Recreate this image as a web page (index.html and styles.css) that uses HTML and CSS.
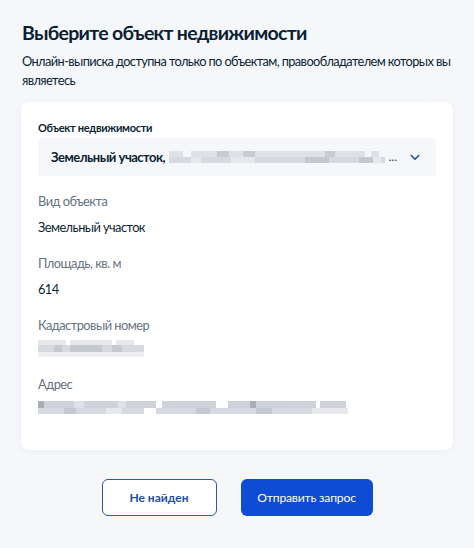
FILE: index.html
```html
<!DOCTYPE html>
<html lang="ru">
<head>
<meta charset="utf-8">
<link rel="stylesheet" href="styles.css">
</head>
<body>
<main class="page">
  <h1 class="title">Выберите объект недвижимости</h1>
  <p class="subtitle">Онлайн-выписка доступна только по объектам, правообладателем которых вы являетесь</p>
  <section class="card">
    <div class="field-label">Объект недвижимости</div>
    <div class="select">
      <span class="select-text">Земельный участок,</span>
      <span class="blur blur-select">
        <span class="row"><i style="width:14px"></i><i class="gap" style="width:8px"></i><i style="width:26px"></i><i class="dk" style="width:12px"></i><i style="width:14px"></i><i class="dk" style="width:12px"></i><i style="width:70px"></i><i class="dk" style="width:10px"></i><i style="width:30px"></i><i class="gap" style="width:6px"></i><i style="width:8px"></i></span>
        <span class="row"><i style="width:22px"></i><i class="lt" style="width:10px"></i><i style="width:30px"></i><i class="lt" style="width:24px"></i><i style="width:50px"></i><i class="dk" style="width:24px"></i><i style="width:30px"></i><i class="dk" style="width:14px"></i><i class="lt" style="width:8px"></i><i style="width:8px"></i></span>
      </span>
      <span class="dots">...</span>
      <svg class="chev" width="10" height="7" viewBox="0 0 10 7"><path d="M1.3 1.5 5 5.2 8.7 1.5" fill="none" stroke="#1d4fa8" stroke-width="1.6" stroke-linecap="round" stroke-linejoin="round"/></svg>
    </div>
    <div class="item">
      <div class="item-label">Вид объекта</div>
      <div class="item-value">Земельный участок</div>
    </div>
    <div class="item">
      <div class="item-label">Площадь, кв. м</div>
      <div class="item-value">614</div>
    </div>
    <div class="item">
      <div class="item-label">Кадастровый номер</div>
      <div class="blur blur-cad">
        <span class="row"><i class="lt" style="width:28px"></i><i class="gap" style="width:4px"></i><i class="lt" style="width:42px"></i><i class="gap" style="width:4px"></i><i class="lt" style="width:18px"></i></span>
        <span class="row"><i style="width:16px"></i><i class="dk" style="width:8px"></i><i style="width:8px"></i><i class="dk" style="width:32px"></i><i style="width:10px"></i><i class="dk" style="width:10px"></i><i style="width:22px"></i></span>
        <span class="row"><i class="lt" style="width:106px"></i></span>
      </div>
    </div>
    <div class="item">
      <div class="item-label">Адрес</div>
      <div class="blur blur-addr">
        <span class="row"><i class="dk" style="width:6px"></i><i style="width:30px"></i><i class="lt" style="width:10px"></i><i style="width:34px"></i><i class="lt" style="width:8px"></i><i style="width:30px"></i><i class="gap" style="width:6px"></i><i style="width:54px"></i><i class="gap" style="width:12px"></i><i style="width:22px"></i><i class="dk" style="width:6px"></i><i style="width:60px"></i><i class="gap" style="width:4px"></i><i style="width:26px"></i></span>
        <span class="row"><i style="width:26px"></i><i class="dk" style="width:12px"></i><i style="width:30px"></i><i class="lt" style="width:16px"></i><i style="width:22px"></i><i class="gap" style="width:12px"></i><i style="width:40px"></i><i class="dk" style="width:14px"></i><i style="width:46px"></i><i class="dk" style="width:16px"></i><i style="width:40px"></i><i class="lt" style="width:36px"></i></span>
      </div>
    </div>
  </section>
  <div class="actions">
    <button class="btn btn-outline">Не найден</button>
    <button class="btn btn-primary">Отправить запрос</button>
  </div>
</main>
</body>
</html>
```
FILE: styles.css
```css
html, body {
  margin: 0;
  padding: 0;
  background: #f5f7fb;
}
body {
  font-family: Lato, "Noto Sans", sans-serif;
  color: #0b1f33;
  width: 474px;
  height: 548px;
  overflow: hidden;
}
.page {
  padding: 20px 21px 0 21px;
}
.title {
  margin: 0 0 0 1px;
  font-size: 19.5px;
  line-height: 26px;
  font-weight: 700;
  letter-spacing: -0.7px;
  color: #0b1f33;
}
.subtitle {
  margin: 6px 0 0 1px;
  font-size: 12.8px;
  line-height: 18.5px;
  letter-spacing: -0.6px;
  color: #0b1f33;
}
.card {
  margin-top: 13px;
  background: #fff;
  border-radius: 8px;
  box-shadow: 0 1px 6px rgba(30, 60, 120, 0.06);
  padding: 18px 17px 26px 17px;
  height: 304px;
}
.field-label {
  font-size: 11px;
  line-height: 16px;
  font-weight: 700;
  letter-spacing: -0.3px;
  color: #0b1f33;
}
.select {
  margin-top: 2px;
  height: 38px;
  background: #f5f7fa;
  border-radius: 4px;
  display: flex;
  align-items: center;
  padding: 0 13px;
  white-space: nowrap;
}
.select-text {
  font-size: 13px;
  font-weight: 700;
  letter-spacing: -0.5px;
  margin-right: 4px;
  flex: none;
}
.blur {
  display: flex;
  flex-direction: column;
  justify-content: center;
}
.row {
  display: flex;
}
.blur i {
  display: block;
  height: 6px;
  background: #d6d9df;
  flex: none;
}
.blur i.dk { background: #c4c8cf; }
.blur i.lt { background: #e6e8ec; }
.blur i.gap { background: transparent; }
.blur-select {
  flex: 1;
  min-width: 0;
  overflow: hidden;
}
.blur-select i {
  height: 6px;
}
.blur-select .row:first-child i { background: #dfe1e6; }
.blur-select .row:first-child i.dk { background: #c8cbd2; }
.blur-select .row:first-child i.gap { background: transparent; }
.dots {
  font-size: 12px;
  color: #333;
  margin: 0 13px 0 4px;
  line-height: 1;
  flex: none;
}
.chev {
  display: block;
  margin-right: 3px;
  flex: none;
}
.item {
  margin-top: 16px;
}
.item + .item {
  margin-top: 18px;
}
.item-label {
  font-size: 12.8px;
  line-height: 18px;
  letter-spacing: -0.5px;
  color: #66727f;
}
.item-value {
  margin-top: 8px;
  font-size: 12.8px;
  line-height: 18px;
  letter-spacing: -0.55px;
  color: #0b1f33;
}
.blur-cad {
  margin-top: 6px;
}
.blur-cad .row:first-child i { height: 5px; }
.blur-cad .row:nth-child(2) i { height: 7px; }
.blur-cad .row:nth-child(3) i { height: 5px; background: #eceef1; }
.blur-addr {
  margin-top: 8px;
}
.blur-addr .row:first-child i { height: 7px; background: #cfd2d8; }
.blur-addr .row:first-child i.dk { background: #a9adb6; }
.blur-addr .row:first-child i.lt { background: #dfe1e5; }
.blur-addr .row:first-child i.gap { background: transparent; }
.blur-addr .row:nth-child(2) i { height: 6px; }
.actions {
  display: flex;
  justify-content: center;
  gap: 24px;
  margin-top: 29px;
}
.btn {
  font-family: Lato, "Noto Sans", sans-serif;
  height: 37px;
  border-radius: 6px;
  padding: 0;
  cursor: pointer;
}
.btn-outline {
  width: 115px;
  background: #fff;
  border: 1.5px solid #2a56b7;
  color: #1d4fa8;
  font-size: 12px;
  font-weight: 700;
}
.btn-primary {
  width: 132px;
  background: #0d4cd3;
  border: none;
  color: #fff;
  font-size: 12.2px;
  letter-spacing: -0.2px;
  font-weight: 400;
}
```
